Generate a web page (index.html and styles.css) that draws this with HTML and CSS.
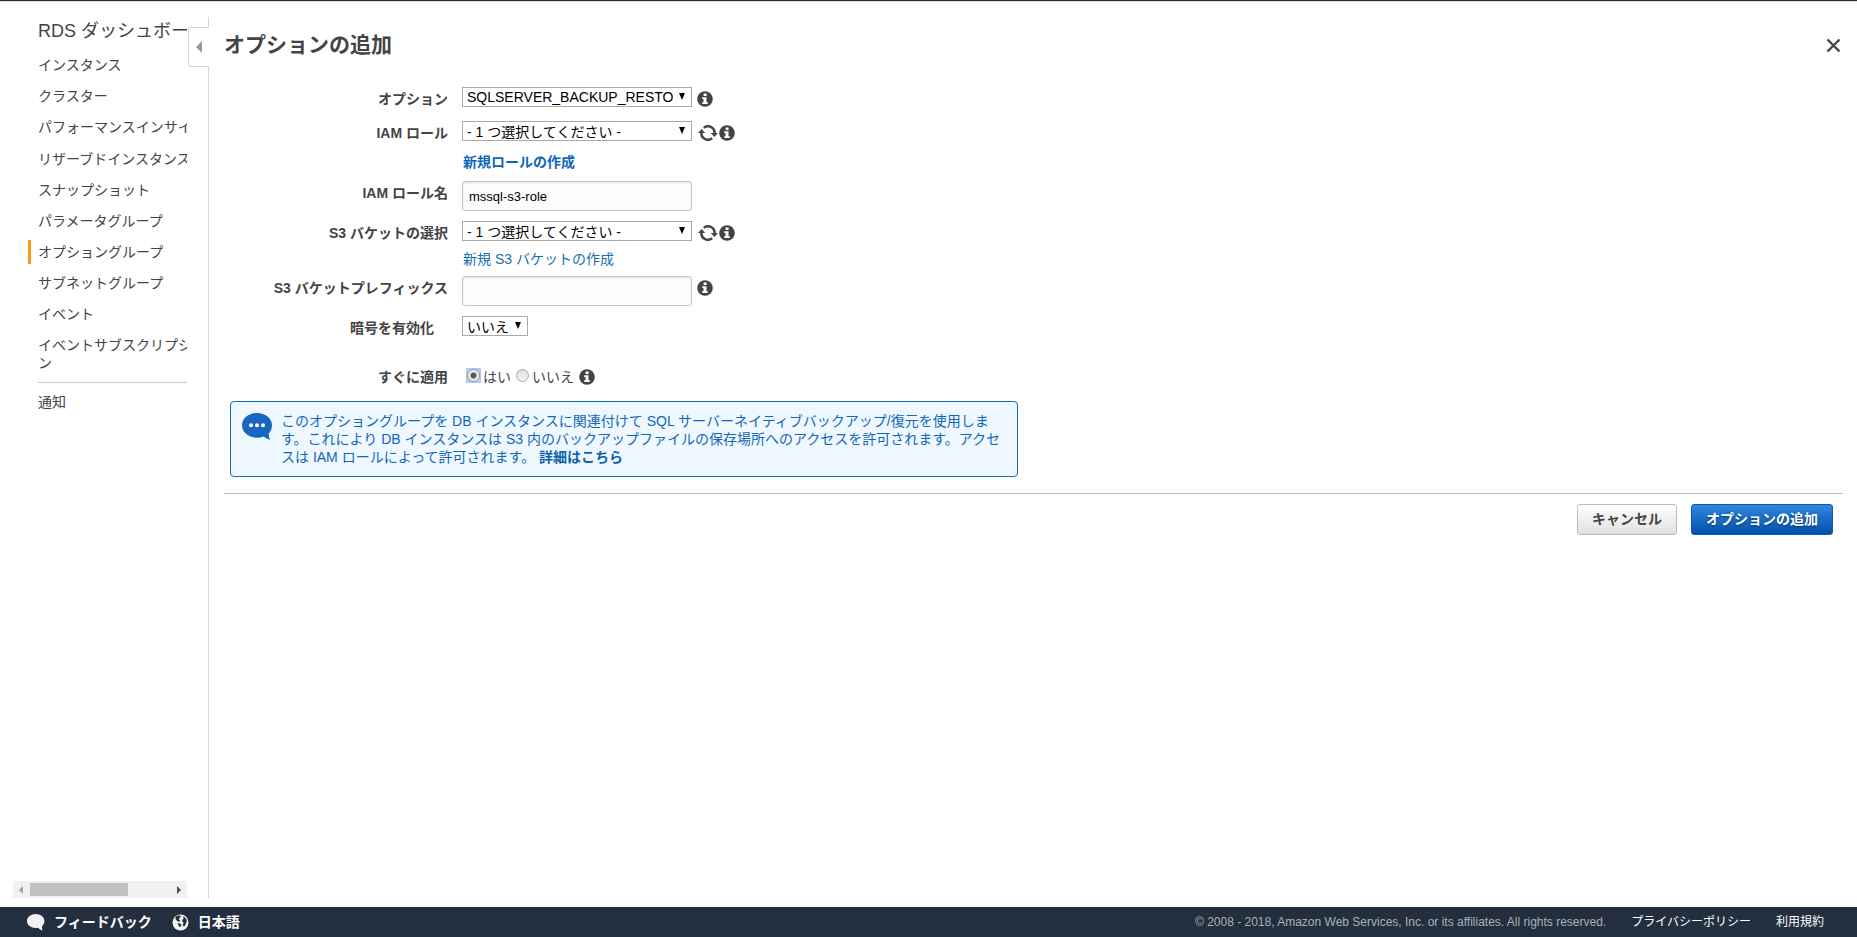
FILE: index.html
```html
<!DOCTYPE html>
<html lang="ja">
<head>
    <meta charset="UTF-8">
    <meta name="viewport" content="width=device-width, initial-scale=1.0">
    <title>オプションの追加</title>
    <link rel="stylesheet" href="styles.css">
</head>
<body>

    <!-- shared icons -->
    <svg class="sprite" aria-hidden="true">
        <symbol id="icon-info" viewBox="0 0 16 16">
            <circle cx="8" cy="8" r="7.8" fill="#444"/>
            <path fill="#fff" d="M6.600 2.600h3v2.500h-3zM5.200 6.300h4.300v4.900h1.300v1.800H5.200v-1.800h1.300V8.100H5.200z"/>
        </symbol>
        <symbol id="icon-refresh" viewBox="0 0 20 16">
            <g fill="none" stroke="#444" stroke-width="2.400">
                <path d="M5.800 2.800A6.600 6.600 0 0 1 16.600 8.500"/>
                <path d="M14.200 13.200A6.600 6.600 0 0 1 3.400 7.500"/>
            </g>
            <path fill="#444" d="M12.800 8H20l-3.600 4zM0 8h7.200L3.600 4z"/>
        </symbol>
    </svg>

    <div class="shell">
        <aside class="sidebar">
            <nav class="nav">
                <div class="nav-inner">
                    <a class="nav-title" href="#">RDS ダッシュボード</a>
                    <a class="nav-item" href="#">インスタンス</a>
                    <a class="nav-item" href="#">クラスター</a>
                    <a class="nav-item" href="#">パフォーマンスインサイト</a>
                    <a class="nav-item long" href="#">リザーブドインスタンス</a>
                    <a class="nav-item" href="#">スナップショット</a>
                    <a class="nav-item" href="#">パラメータグループ</a>
                    <a class="nav-item active" href="#">オプショングループ</a>
                    <a class="nav-item" href="#">サブネットグループ</a>
                    <a class="nav-item" href="#">イベント</a>
                    <a class="nav-item" href="#">イベントサブスクリプション</a>
                    <hr class="nav-line">
                    <a class="nav-item" href="#">通知</a>
                </div>
            </nav>
            <div class="scrollbar">
                <span class="scroll-left"></span>
                <span class="scroll-track"><span class="scroll-thumb"></span></span>
                <span class="scroll-right"></span>
            </div>
            <button class="collapse" type="button" aria-label="閉じる"></button>
        </aside>

        <main class="main">
            <header class="header">
                <h1>オプションの追加</h1>
                <button class="close" type="button" aria-label="閉じる">
                    <svg width="15" height="15" viewBox="0 0 15 15"><path d="M1.500 1.500l12 12M13.500 1.500l-12 12" stroke="#444" stroke-width="2.400"/></svg>
                </button>
            </header>

            <form>
                <div class="row">
                    <label class="label" for="option">オプション</label>
                    <div class="field">
                        <span class="select">
                            <select id="option"><option>SQLSERVER_BACKUP_RESTORE</option></select>
                        </span>
                    </div>
                    <svg class="info"><use href="#icon-info"/></svg>
                </div>

                <div class="row">
                    <label class="label" for="role">IAM ロール</label>
                    <div class="field">
                        <span class="select">
                            <select class="ja" id="role"><option>- 1 つ選択してください -</option></select>
                        </span>
                        <a class="link strong" href="#">新規ロールの作成</a>
                    </div>
                    <svg class="refresh"><use href="#icon-refresh"/></svg>
                    <svg class="info"><use href="#icon-info"/></svg>
                </div>

                <div class="row">
                    <label class="label" for="roleName">IAM ロール名</label>
                    <div class="field">
                        <input class="text" id="roleName" type="text" value="mssql-s3-role">
                    </div>
                </div>

                <div class="row">
                    <label class="label" for="bucket">S3 バケットの選択</label>
                    <div class="field">
                        <span class="select">
                            <select class="ja" id="bucket"><option>- 1 つ選択してください -</option></select>
                        </span>
                        <a class="link" href="#">新規 S3 バケットの作成</a>
                    </div>
                    <svg class="refresh"><use href="#icon-refresh"/></svg>
                    <svg class="info"><use href="#icon-info"/></svg>
                </div>

                <div class="row">
                    <label class="label" for="prefix">S3 バケットプレフィックス</label>
                    <div class="field">
                        <input class="text" id="prefix" type="text">
                    </div>
                    <svg class="info"><use href="#icon-info"/></svg>
                </div>

                <div class="row">
                    <label class="label indent" for="encrypt">暗号を有効化</label>
                    <span class="select small">
                        <select class="ja" id="encrypt"><option>いいえ</option></select>
                    </span>
                </div>

                <div class="row apply" role="radiogroup" aria-labelledby="applyLabel">
                    <span class="label" id="applyLabel">すぐに適用</span>
                    <div class="radios">
                        <input class="radio" type="radio" name="apply" id="applyYes" checked>
                        <label for="applyYes">はい</label>
                        <input class="radio" type="radio" name="apply" id="applyNo">
                        <label for="applyNo">いいえ</label>
                    </div>
                    <svg class="info"><use href="#icon-info"/></svg>
                </div>

                <div class="notice">
                    <svg class="notice-icon" width="30" height="27" viewBox="0 0 30 27">
                        <path fill="#1866c0" d="M15 0C6.700 0 0 5.300 0 12.200s6.700 12.500 15 12.500c2.500 0 4.700-.4 6.700-1.200 1.800 1.500 4 2.700 6.600 3.300-1.100-1.800-1.600-4-1.500-6.200 2-2.200 3.200-5.200 3.200-8.400C30 5.300 23.300 0 15 0z"/>
                        <g fill="#fff"><circle cx="9" cy="12.200" r="2"/><circle cx="15" cy="12.200" r="2"/><circle cx="21" cy="12.200" r="2"/></g>
                    </svg>
                    <p>このオプショングループを DB インスタンスに関連付けて SQL サーバーネイティブバックアップ/復元を使用します。これにより DB インスタンスは S3 内のバックアップファイルの保存場所へのアクセスを許可されます。アクセスは IAM ロールによって許可されます。 <a href="#">詳細はこちら</a></p>
                </div>

                <div class="actions">
                    <button class="btn" type="button">キャンセル</button>
                    <button class="btn primary" type="submit">オプションの追加</button>
                </div>
            </form>
        </main>
    </div>

    <footer class="footer">
        <a class="foot-main" href="#">
            <svg width="18" height="17" viewBox="0 0 18 17"><path fill="#f2f2f2" d="M8.700 0C3.900 0 0 3.100 0 7s3.900 7 8.700 7c.9 0 1.700-.1 2.500-.3 1.200 1.400 2.700 2.500 4.600 2.900-.8-1.200-1-2.900-.6-4.600 1.400-1.300 2.200-3 2.200-5C17.400 3.100 13.500 0 8.700 0z"/></svg>
            フィードバック
        </a>
        <a class="foot-main" href="#">
            <svg width="17" height="17" viewBox="0 0 17 17">
                <circle cx="8.500" cy="8.500" r="8" fill="#f2f2f2"/>
                <path fill="#232f3e" d="M3.500 3C5 1.800 6.500 1.500 8 1.600l1 1.400-1.600.8-.4 1.700 1.300 1.300-1 1-2-.6L3.500 5zM10.500 2.200l2.600 1.200 1.700 2.600-.4 2.500-1.600 3.600-1.400.4-.6-2.200.9-1.700-1.600-1.200.4-2 1.300-.9zM5.500 9l2.500.4 1.600 1.500-.8 1.600-1.300.6-1-1.800z"/>
            </svg>
            日本語
        </a>
        <span class="copyright">© 2008 - 2018, Amazon Web Services, Inc. or its affiliates. All rights reserved.</span>
        <a class="foot-sub" href="#">プライバシーポリシー</a>
        <a class="foot-sub" href="#">利用規約</a>
    </footer>

</body>
</html>
```

FILE: styles.css
```css
* { box-sizing: border-box; }

body {
    margin:             0;
    height:             100vh;
    display:            flex;
    flex-direction:     column;
    border-top:         1px solid #232f3e;
    background-color:   #fff;
    color:              #444;
    font-family:        "Liberation Sans", "Noto Sans CJK JP", sans-serif;
    font-size:          14px;
    line-height:        18px;
}

a                       { text-decoration: none; color: #444; }
select, input, button   { font-family: inherit; margin: 0; }

.sprite {
    position:           absolute;
    width:              0;
    height:             0;
}

.shell {
    flex:               1;
    min-height:         0;
    display:            flex;
    padding:            15px 0 9px;
    border-top:         1px solid #d5dbe2;
}

/* ---- sidebar ---- */
.sidebar {
    position:           relative;
    flex:               none;
    width:              209px;
    display:            flex;
    flex-direction:     column;
    padding:            0 21px 0 13px;
    border-right:       1px solid #d5d5d5;
}

.nav {
    flex:               1;
    min-height:         0;
    margin-left:        15px;
    overflow:           hidden;
}

.nav-inner {
    width:              184px;
    display:            flex;
    flex-direction:     column;
    gap:                7px;
}

.nav-title {
    padding:            1px 0 2px 10px;
    font-size:          18px;
    line-height:        26px;
}

.nav-item {
    padding:            3px 0 3px 7px;
    border-left:        3px solid transparent;
}

.nav-item.long          { padding-top: 4px; }
.nav-item.active        { border-left-color: #ff9914; }

.nav-line {
    width:              174px;
    height:             1px;
    margin:             0 0 0 10px;
    border:             0;
    background-color:   #ccc;
}

.scrollbar {
    display:            flex;
    align-items:        center;
    height:             17px;
    padding:            0 6px;
    background-color:   #f1f1f1;
}

.scroll-left, .scroll-right {
    border:             4px solid transparent;
    border-left-width:  0;
    border-right:       4px solid #a3a3a3;
}

.scroll-right {
    border-right-width: 0;
    border-left:        4px solid #505050;
}

.scroll-track {
    flex:               1;
    padding:            0 7px;
}

.scroll-thumb {
    display:            block;
    width:              70%;
    height:             13px;
    background-color:   #c1c1c1;
}

.collapse {
    position:           absolute;
    top:                10px;
    right:              -1px;
    width:              21px;
    height:             40px;
    padding:            0 0 0 7px;
    border:             1px solid #d5d5d5;
    border-right:       0;
    border-radius:      4px 0 0 4px;
    background-color:   #fff;
}

.collapse::before {
    content:            "";
    display:            block;
    width:              0;
    border:             6px solid transparent;
    border-left-width:  0;
    border-right-color: #999;
}

/* ---- form ---- */
.main {
    flex:               1;
    min-width:          0;
    padding:            0 14px 0 15px;
}

.header {
    display:            flex;
    justify-content:    space-between;
    align-items:        center;
    margin-bottom:      14px;
    padding-right:      2px;
}

h1 {
    margin:             0;
    font-size:          21px;
    line-height:        56px;
}

.close {
    display:            flex;
    padding:            0;
    border:             0;
    background:         none;
}

.row {
    display:            flex;
    align-items:        flex-start;
    min-height:         24px;
    margin-bottom:      10px;
}

.label {
    width:              224px;
    margin-right:       14px;
    font-weight:        bold;
    line-height:        24px;
    text-align:         right;
}

.label.indent           { padding-right: 14px; }

.field {
    width:              230px;
    margin-right:       5px;
}

.select {
    display:            block;
    position:           relative;
    width:              230px;
}

.select.small           { width: 66px; }

.select::after {
    content:            "";
    position:           absolute;
    top:                6px;
    right:              7px;
    border:             3px solid transparent;
    border-top:         7px solid #000;
    border-bottom:      0;
    pointer-events:     none;
}

select {
    display:            block;
    appearance:         none;
    width:              100%;
    height:             20px;
    padding:            0 18px 0 4px;
    border:             1px solid #a9a9a9;
    border-radius:      0;
    background-color:   #fff;
    color:              #000;
    font-size:          14px;
}

select.ja               { padding-top: 2px; }

.text {
    display:            block;
    width:              100%;
    height:             30px;
    padding:            0 6px;
    border:             1px solid #c5c5c5;
    border-radius:      3px;
    background-color:   #fcfcfc;
    box-shadow:         inset 0 1px 2px #e5e5e5;
    color:              #000;
    font-size:          13px;
}

.link {
    display:            block;
    padding:            11px 0 0 1px;
    line-height:        14px;
    color:              #146eb4;
}

.link.strong {
    padding:            14px 0 2px 1px;
    color:              #1166bb;
    font-weight:        bold;
}

.info {
    width:              16px;
    height:             16px;
    margin-top:         4px;
}

.refresh {
    width:              20px;
    height:             16px;
    margin:             4px 1px 0 1px;
}

.row.apply              { margin: 25px 0 12px; }

.radios {
    display:            flex;
    align-items:        center;
    gap:                3px;
    height:             24px;
    margin-right:       3px;
    padding-left:       5px;
}

.radios label           { margin-right: 2px; }

.radio {
    appearance:         none;
    width:              13px;
    height:             13px;
    margin-bottom:      4px;
    border:             1px solid #aaa;
    border-radius:      50%;
    background:         linear-gradient(#ddd, #f5f5f5);
}

/* focus ring is a square around the round button */
.radio:checked {
    width:              15px;
    height:             15px;
    margin:             0 -1px 4px;
    border:             1px solid #a8c7fa;
    border-radius:      0;
    background:         radial-gradient(circle, #555 2px, #eee 4px, #eee 5px, #999 6px, #b9d2fb 7px);
}

.notice {
    display:            flex;
    max-width:          788px;
    margin-left:        6px;
    padding:            10px 10px 10px 11px;
    border:             1px solid #0a6ab6;
    border-radius:      4px;
    background-color:   #f0f8ff;
    color:              #1166bb;
}

.notice-icon {
    flex:               none;
    margin:             1px 9px 0 0;
}

.notice p               { margin: 0; }
.notice a               { color: #0a62ac; font-weight: bold; }

.actions {
    display:            flex;
    justify-content:    flex-end;
    gap:                14px;
    margin-top:         16px;
    padding:            10px 10px 0 0;
    border-top:         1px solid #bbb;
}

.btn {
    height:             31px;
    padding:            0 14px 3px;
    border:             1px solid #bbb;
    border-radius:      3px;
    background:         linear-gradient(#fff, #e0e0e0);
    color:              #444;
    font-size:          14px;
    font-weight:        bold;
}

.btn.primary {
    border-color:       #0a5cb8;
    background:         linear-gradient(#2f86e0, #0550a8);
    color:              #fff;
    text-shadow:        0 1px 2px #003366;
}

/* ---- footer ---- */
.footer {
    display:            flex;
    align-items:        center;
    height:             30px;
    padding:            0 33px 0 27px;
    background-color:   #232f3e;
}

.foot-main {
    display:            flex;
    align-items:        center;
    gap:                9px;
    margin-right:       20px;
    color:              #fff;
    font-weight:        bold;
}

.copyright {
    margin-left:        auto;
    color:              #aab0b5;
    font-size:          12px;
}

.foot-sub {
    margin-left:        25px;
    color:              #fff;
    font-size:          12px;
}
```
